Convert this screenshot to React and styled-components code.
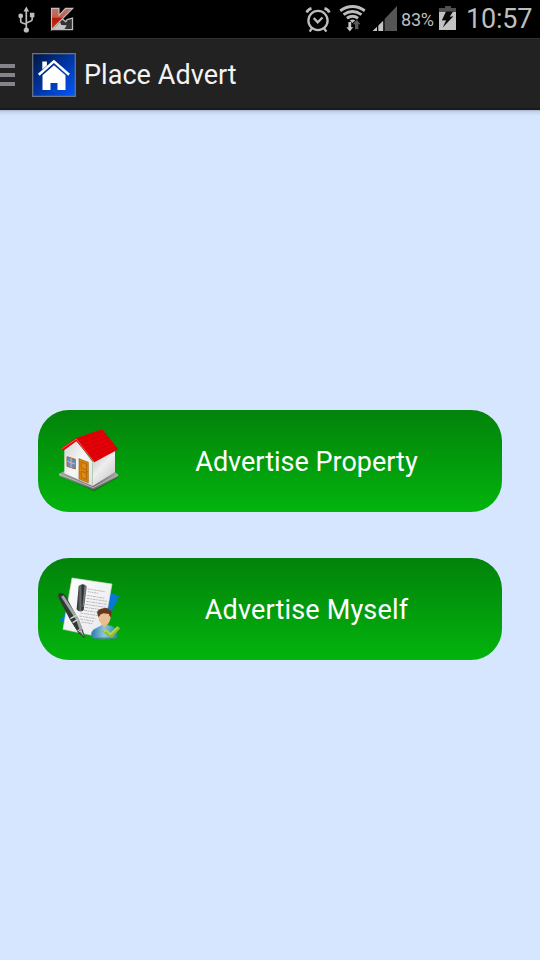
import React from 'react';
import styled, { createGlobalStyle } from 'styled-components';

const GlobalStyle = createGlobalStyle`
  * { box-sizing: border-box; }
  body { margin: 0; background: #d7e6ff; font-family: Roboto, "Noto Sans", sans-serif; }
  svg { display: block; flex: none; }
`;

const Screen = styled.div`
  width: 540px;
  height: 960px;
  display: flex;
  flex-direction: column;
  overflow: hidden;
  background: #d7e6ff;
`;

const StatusBar = styled.div`
  height: 38px;
  flex: none;
  display: flex;
  justify-content: space-between;
  background: #000;
  color: #bebebe;
`;

const StatusGroup = styled.div`
  display: flex;
  height: 38px;
`;

const BatteryLevel = styled.span`
  width: 37px;
  padding-left: 1px;
  font-size: 18px;
  line-height: 39px;
  letter-spacing: -0.2px;
  white-space: nowrap;
`;

const Clock = styled.span`
  width: 75px;
  padding-left: 1px;
  font-size: 27px;
  line-height: 38px;
  letter-spacing: -0.2px;
  white-space: nowrap;
`;

const ActionBar = styled.header`
  height: 72px;
  flex: none;
  display: flex;
  align-items: center;
  padding-top: 2px;
  background: #222;
  border-top: 1px solid #303030;
  border-bottom: 2px solid #1a1a1a;
`;

const MenuLines = styled.div`
  width: 15px;
  margin: 1px 17px 0 0;
  display: flex;
  flex-direction: column;
  gap: 5px;
`;

const MenuLine = styled.i`
  height: 4px;
  background: #85848a;
`;

const Title = styled.h1`
  margin: 1px 0 0 8px;
  color: #f3f3f3;
  font-weight: 400;
  font-size: 27px;
  line-height: 34px;
  letter-spacing: 0.05px;
`;

const Content = styled.main`
  flex: 1;
  display: flex;
  flex-direction: column;
  gap: 46px;
  padding: 300px 38px 0;
  background: linear-gradient(#9eacc5 0, #bccbe5 1px, #cbdaf4 3px, #d7e6ff 6px);
`;

const AdvertButton = styled.button`
  height: 102px;
  flex: none;
  display: flex;
  align-items: center;
  padding: 0 0 0 12px;
  border: 0;
  border-radius: 31px;
  background: linear-gradient(#02820b, #02b40d);
  color: #fff;
  font-family: inherit;
  font-size: 27px;
  line-height: 34px;
`;

const ButtonLabel = styled.span`
  flex: 1;
  padding: 2px 19px 0 0;
  text-align: center;
  letter-spacing: ${(p) => p.$tracking || 0}px;
`;

function NotificationIcons() {
  return (
    <svg width="90" height="38" viewBox="0 0 90 38">
      <g stroke="#bdbdbd" strokeWidth="1.7" fill="none">
        <path d="M26.3 10v20M20.7 17v4q0 1.7 1.8 2l3.8 1.3M32.2 16v3q0 1.7-1.8 2.3l-4.1 1.7" />
      </g>
      <g fill="#bdbdbd">
        <path d="M26.3 6.5l2.8 5h-5.6z" />
        <circle cx="20.7" cy="15.9" r="2.4" />
        <path d="M29.9 12.8h4.5v4.5h-4.5z" />
        <circle cx="26.3" cy="30" r="2.6" />
      </g>
      <defs>
        <linearGradient id="kred" x1="0" y1="0" x2="0" y2="1">
          <stop offset="0" stopColor="#b9796f" /><stop offset=".42" stopColor="#c35b4e" />
          <stop offset=".46" stopColor="#b71905" /><stop offset="1" stopColor="#c63220" />
        </linearGradient>
      </defs>
      <path d="M52 29.6L61.8 18.5l4 3.2 1.4-2.2 5.3-1.3v11.4z" fill="#303333" stroke="#bdbdbd" strokeWidth="1.3" />
      <path d="M53.5 29l6.5-7 1.4 3 5.3.2-2.2 3.8z" fill="#c4c4c4" />
      <path d="M51.5 8.4H59v7l6.5-7h7.3L51.5 29.6z" fill="url(#kred)" stroke="#c8bebb" strokeWidth="1.1" />
    </svg>
  );
}

function ConnectivityIcons() {
  return (
    <svg width="96" height="38" viewBox="304 0 96 38">
      <g fill="none" stroke="#bdbdbd" strokeWidth="2.3">
        <circle cx="318" cy="20.5" r="9.6" />
        <path d="M313.7 18l4 4.3 4.8-4.8" />
        <path d="M306.7 12.5q1-3 4.8-4.1M324.5 8.4q3.8 1.1 4.8 4.1" strokeWidth="2.7" />
        <path d="M312 28l-2.3 3.7M324 28l2.3 3.7" strokeWidth="2.3" />
      </g>
      <g fill="none" stroke="#bdbdbd" strokeWidth="2.9">
        <path d="M340.2 10.7Q352.5 2.4 364.8 10.7" />
        <path d="M343.5 14.6Q352.5 8.4 361.5 14.6" />
        <path d="M346.9 18.2Q352.5 14.2 358.1 18.2" />
      </g>
      <path d="M349.8 20.6Q352.5 18.6 355.2 20.6L352.5 23z" fill="#bdbdbd" />
      <path d="M348.4 22h2.8v5.2h2l-3.4 4.3-3.4-4.3h2z" fill="#c8c8c8" />
      <path d="M355 29.3v-5h-2.2l3.9-4.5 3.9 4.5h-2.2v5z" fill="#585858" />
      <path d="M372.5 31l4.5-4.2V31zM378.3 31v-5.5l4.9-4.7V31z" fill="#c4c4c4" />
      <path d="M384.6 31V19.1L397 6v25z" fill="#555" />
    </svg>
  );
}

function BatteryIcon() {
  return (
    <svg width="28" height="38" viewBox="437 0 28 38">
      <path d="M439 8h6V6h6v2h5v4h-17z" fill="#505050" />
      <path d="M439 12h17v18h-17z" fill="#c2c2c2" />
      <path d="M446 11.5h7l-3.3 5.2 3.7-.5-10.6 11.3 3.3-7.2-4.3.3z" fill="#080808" />
    </svg>
  );
}

function AppIcon() {
  return (
    <svg width="44" height="44" viewBox="32 52 44 44">
      <defs>
        <linearGradient id="appBlue" x1="0" y1="0" x2="1" y2="1">
          <stop offset="0" stopColor="#001642" /><stop offset=".55" stopColor="#0039ad" /><stop offset="1" stopColor="#0059ff" />
        </linearGradient>
      </defs>
      <path d="M32.7 52.7h42.6v42.6H32.7z" fill="url(#appBlue)" stroke="#717782" strokeWidth="1.2" />
      <path d="M42.3 60.5h4.6v4l-4.6 4z" fill="#fff" />
      <path d="M38.8 73.7L53.9 60.4 69.1 73.7" fill="none" stroke="#fff" strokeWidth="2.5" />
      <path d="M42.5 74.2L54 64.3l11.5 9.9V89h-8v-7h-7v7h-8z" fill="#fff" />
    </svg>
  );
}

function HouseIcon() {
  return (
    <svg width="80" height="80" viewBox="0 2 240 240">
      <defs>
        <linearGradient id="wallRight" x1="0" y1="0" x2=".7" y2="1">
          <stop stopColor="#bebebe" /><stop offset=".5" stopColor="#eee" /><stop offset="1" stopColor="#c9c9c9" />
        </linearGradient>
        <linearGradient id="wallLeft" x1="0" y1="0" x2="1" y2="1">
          <stop stopColor="#d2d2d2" /><stop offset=".5" stopColor="#f7f7f7" /><stop offset="1" stopColor="#dedede" />
        </linearGradient>
        <linearGradient id="baseStone" x1="0" y1="0" x2="0" y2="1">
          <stop stopColor="#aaa" /><stop offset="1" stopColor="#656565" />
        </linearGradient>
      </defs>
      <path d="M27 165L132 213 205 171v-8L155 133 48 150z" fill="#174e19" opacity=".6" />
      <path d="M27 160L46 151 128 190 192 154 205 162V168L131 209 27 166z" fill="url(#baseStone)" />
      <path d="M28 161L130 202 203 163" stroke="#bbb" strokeWidth="3" fill="none" />
      <path d="M43 88L79 60 128 125V197L43 159z" fill="url(#wallLeft)" />
      <path d="M128 122L195 92V155L128 197z" fill="url(#wallRight)" />
      <path d="M34 84L78 53 156 27 205 87 133 126 79 63 40 91z" fill="#e30006" />
      <path d="M83 58L160 33M91 67L168 42M99 77L176 51M107 88L184 60M115 98L191 69M122 107L197 79M130 117L202 86" stroke="#b90009" strokeWidth="1.4" />
      <path d="M35 86L79 56 132 125" fill="none" stroke="#ff5454" strokeWidth="3" />
      <path d="M51 109L76 117V146L51 138z" fill="#6189d3" stroke="#a66d22" strokeWidth="3" />
      <path d="M63 113v29M52 123l23 8" stroke="#d5bd90" strokeWidth="3" />
      <path d="M87 115L115 126V187L87 176z" fill="#d98409" stroke="#98600f" strokeWidth="2" />
      <path d="M94 125L109 131V149L94 143zM94 153L109 159V177L94 171z" fill="#df8b15" stroke="#a25b03" strokeWidth="2" />
      <circle cx="110" cy="154" r="2" fill="#66522b" />
    </svg>
  );
}

function ProfileIcon() {
  return (
    <svg width="80" height="80" viewBox="0 -3 240 240">
      <defs>
        <linearGradient id="paper" x2="1" y2="1"><stop stopColor="#fff" /><stop offset="1" stopColor="#e7e7ed" /></linearGradient>
        <linearGradient id="penMetal" x1="0" x2="1"><stop stopColor="#1b2020" /><stop offset=".35" stopColor="#686e6e" /><stop offset=".6" stopColor="#222727" /><stop offset="1" stopColor="#aaa" /></linearGradient>
        <linearGradient id="shirt" x1="0" x2="1"><stop stopColor="#287aaf" /><stop offset=".5" stopColor="#91c6db" /><stop offset="1" stopColor="#3586ae" /></linearGradient>
      </defs>
      <path d="M53 119L29 153 48 160zM181 68L208 78 183 128 154 143z" fill="#0877d5" />
      <path d="M66 24L186 42 157 202 39 178z" fill="url(#paper)" stroke="#d3ddcf" strokeWidth="2" />
      <g stroke="#9b9c9e" strokeWidth="2" strokeDasharray="9 2 5 2">
        <path d="M113 57L164 65M113 65L145 70M111 76L165 85M110 85L171 94M108 94L169 103M107 103L167 112M105 112L165 121M102 121L158 129M91 129L146 137M88 138L137 146M90 147L132 154M94 156L127 161" />
      </g>
      <path d="M86 48Q98 37 111 49L101 120Q89 130 80 118z" fill="url(#penMetal)" />
      <path d="M104 49l5 3-8 58-4 1z" fill="#777b7b" />
      <path d="M27 70Q40 66 47 78L85 148 99 180 104 205 85 189 60 149 27 86Q22 76 27 70z" fill="#323737" />
      <path d="M37 78L83 149 93 178" stroke="#a0a7a7" strokeWidth="9" fill="none" />
      <path d="M61 146L79 136M68 158L84 148M83 182L98 177" stroke="#d6d9d6" strokeWidth="4" />
      <path d="M85 184L95 178 104 204z" fill="#c4c7c3" stroke="#444" strokeWidth="2" />
      <path d="M91 186l12 17" stroke="#353939" strokeWidth="2" />
      <path d="M125 203Q119 182 139 174L155 165H173Q200 169 201 189L200 204Q164 214 125 203z" fill="url(#shirt)" />
      <path d="M127 205Q165 200 201 206Q165 214 127 205" fill="#287b61" opacity=".7" />
      <path d="M145 132Q142 119 157 115Q179 110 185 129L180 150Q176 165 165 166Q152 164 146 149z" fill="#ebbd93" />
      <path d="M144 138Q135 120 155 116Q178 109 186 128L183 142Q177 139 177 132L160 130Q150 132 146 142z" fill="#62391d" />
      <path d="M153 163L164 172 174 162" fill="#e7b990" />
      <path d="M158 185L168 178 181 188 202 168 211 175 185 203z" fill="#8cc51b" />
      <path d="M162 185L169 181 181 193 203 172" stroke="#bddb55" strokeWidth="4" fill="none" />
    </svg>
  );
}

export default function App() {
  return (
    <>
      <GlobalStyle />
      <Screen>
        <StatusBar>
          <StatusGroup><NotificationIcons /></StatusGroup>
          <StatusGroup>
            <ConnectivityIcons />
            <BatteryLevel>83%</BatteryLevel>
            <BatteryIcon />
            <Clock>10:57</Clock>
          </StatusGroup>
        </StatusBar>
        <ActionBar>
          <MenuLines><MenuLine /><MenuLine /><MenuLine /></MenuLines>
          <AppIcon />
          <Title>Place Advert</Title>
        </ActionBar>
        <Content>
          <AdvertButton><HouseIcon /><ButtonLabel>Advertise Property</ButtonLabel></AdvertButton>
          <AdvertButton><ProfileIcon /><ButtonLabel $tracking={0.17}>Advertise Myself</ButtonLabel></AdvertButton>
        </Content>
      </Screen>
    </>
  );
}
